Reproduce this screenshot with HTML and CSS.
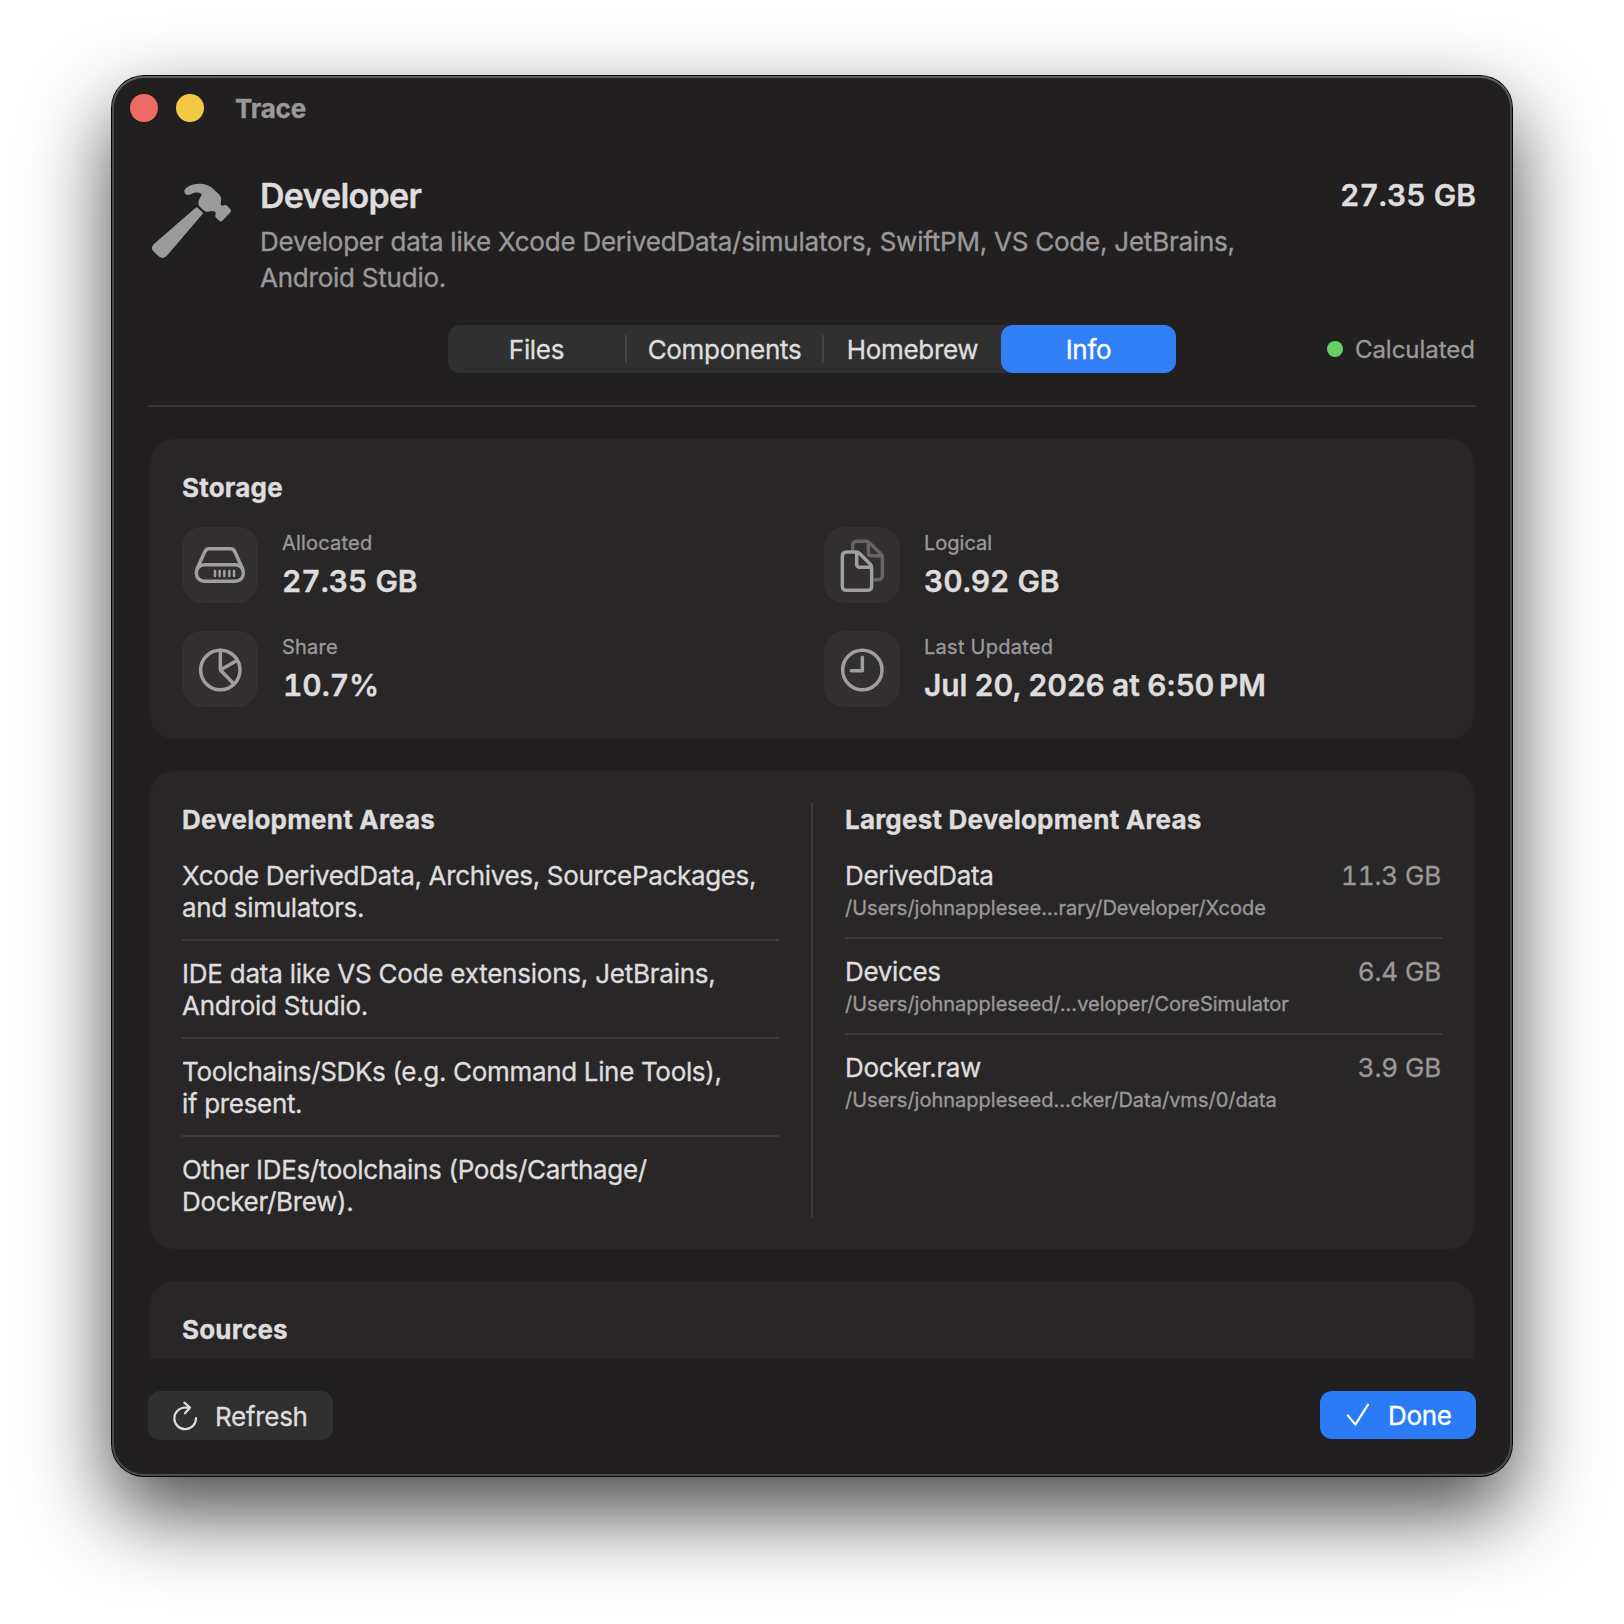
FILE: index.html
```html
<!DOCTYPE html>
<html lang="en">
<head>
<meta charset="utf-8">
<title>Trace</title>
<link rel="stylesheet" href="styles.css">
</head>
<body>
<main class="window">
  <header class="titlebar">
    <span class="light light-close"></span>
    <span class="light light-minimize"></span>
    <span class="titlebar-name">Trace</span>
  </header>

  <section class="summary">
    <svg class="summary-icon" viewBox="9 0 252 252" aria-hidden="true">
      <path d="M118 49C118 38 138 26 162 26C184 26 198 34 208 45L221 57C228 64 230 71 228 80L227 87C229 92 233 93 237 91C242 89 246 92 249 95L255 101C259 105 259 109 255 113L235 134C230 140 226 141 221 136L214 129C210 125 210 121 212 116C213 111 209 108 203 108L187 110C182 111 179 109 176 106L166 97C160 91 159 84 161 77C163 69 171 63 170 58C164 51 148 51 138 58C132 62 118 62 118 49Z"/>
      <path d="M152 98Q155 95 158 98L172 112Q175 115 172 118L67 241Q54 256 41 244L25 229Q16 219 26 208Z"/>
    </svg>
    <div class="summary-text">
      <h1>Developer</h1>
      <p>Developer data like Xcode DerivedData/simulators, SwiftPM, VS Code, JetBrains, Android Studio.</p>
    </div>
    <span class="summary-size">27.35 GB</span>
  </section>

  <nav class="toolbar">
    <div class="tabs">
      <span class="tab tab-files">Files</span>
      <i class="tab-rule"></i>
      <span class="tab tab-components">Components</span>
      <i class="tab-rule"></i>
      <span class="tab tab-homebrew">Homebrew</span>
      <span class="tab tab-info">Info</span>
    </div>
    <div class="status"><i class="status-dot"></i><span>Calculated</span></div>
  </nav>

  <div class="content">
    <section class="card">
      <h2>Storage</h2>
      <div class="stats">
        <div class="stat">
          <svg class="tile" viewBox="0 0 228 228" aria-hidden="true">
            <rect x="43" y="113" width="141" height="50" rx="24"/>
            <path d="M46 124L68 75Q72 65 82 65H145Q155 65 159 75L181 124"/>
            <path class="ticks" d="M99 132V147M113 132V147M127 132V147M142 132V147M156 132V147"/>
          </svg>
          <div><span class="label">Allocated</span><span class="value">27.35 GB</span></div>
        </div>
        <div class="stat">
          <svg class="tile" viewBox="0 0 228 228" aria-hidden="true">
            <path class="dim" d="M86 66V56Q86 43 99 43H127Q132 43 136 47L171 81Q175 85 175 91V145Q175 158 162 158H153"/>
            <path class="dim" d="M133 46V77Q133 86 142 86H173"/>
            <path d="M68 75H96Q102 75 106 79L139 112Q143 116 143 122V177Q143 190 130 190H68Q55 190 55 177V88Q55 75 68 75Z"/>
            <path d="M98 78V112Q98 121 107 121H141"/>
          </svg>
          <div><span class="label label-logical">Logical</span><span class="value">30.92 GB</span></div>
        </div>
        <div class="stat">
          <svg class="tile" viewBox="0 0 228 228" aria-hidden="true">
            <circle cx="115" cy="117" r="59"/>
            <path d="M115 58V117L166 88M115 117L155 158"/>
          </svg>
          <div><span class="label">Share</span><span class="value value-share">10.7%</span></div>
        </div>
        <div class="stat">
          <svg class="tile" viewBox="0 0 228 228" aria-hidden="true">
            <circle cx="115" cy="117" r="59"/>
            <path d="M115 79V119H82"/>
          </svg>
          <div><span class="label label-updated">Last Updated</span><span class="value value-date">Jul 20, 2026 at 6:50&#8201;PM</span></div>
        </div>
      </div>
    </section>

    <section class="card areas">
      <div>
        <h2>Development Areas</h2>
        <ul class="list">
          <li>Xcode DerivedData, Archives, SourcePackages,<br>and simulators.</li>
          <li class="relaxed">IDE data like VS Code extensions, JetBrains,<br>Android Studio.</li>
          <li>Toolchains/SDKs (e.g. Command Line Tools),<br>if present.</li>
          <li>Other IDEs/toolchains (Pods/Carthage/<br>Docker/Brew).</li>
        </ul>
      </div>
      <i class="areas-rule"></i>
      <div>
        <h2>Largest Development Areas</h2>
        <ul class="list">
          <li>
            <div class="entry"><span>DerivedData</span><span class="size">11.3 GB</span></div>
            <div class="path">/Users/johnapplesee…rary/Developer/Xcode</div>
          </li>
          <li>
            <div class="entry"><span>Devices</span><span class="size">6.4 GB</span></div>
            <div class="path">/Users/johnappleseed/…veloper/CoreSimulator</div>
          </li>
          <li>
            <div class="entry"><span>Docker.raw</span><span class="size">3.9 GB</span></div>
            <div class="path">/Users/johnappleseed…cker/Data/vms/0/data</div>
          </li>
        </ul>
      </div>
    </section>

    <section class="card">
      <h2>Sources</h2>
    </section>
  </div>

  <footer class="footer">
    <button class="button button-refresh">
      <svg viewBox="216 420 81 93" width="27" height="31" aria-hidden="true"><path d="M288 474A32.500 32.500 0 1 1 255.500 442.500L270 443M253 428L270 443L255 460"/></svg>
      <span>Refresh</span>
    </button>
    <button class="button button-done">
      <svg viewBox="285 430 78 78" width="26" height="26" aria-hidden="true"><path d="M293.500 470L316 498L354 438"/></svg>
      <span>Done</span>
    </button>
  </footer>
</main>
</body>
</html>
```
FILE: styles.css
```css
* { box-sizing: border-box; }

body {
  margin: 0;
  height: 1624px;
  padding: 76px 112px;
  background: #fff;
  color: #dedcdd;
  font: 400 26px/32px Inter, "Liberation Sans", sans-serif;
  letter-spacing: -0.3px;
  -webkit-text-stroke: 0.35px currentColor;
  overflow: hidden;
}

h1, h2, p, ul { margin: 0; padding: 0; }

.window {
  display: flex;
  flex-direction: column;
  width: 1400px;
  height: 1400px;
  border-radius: 32px;
  background: #211f20;
  box-shadow:
    inset 0 2px 0 #5e5e5e,
    inset 0 0 0 2px #4c4c4c,
    0 0 0 1px #060606,
    0 36px 84px rgba(0, 0, 0, 0.73);
}

.titlebar {
  display: flex;
  align-items: center;
  height: 63px;
  margin: 0 2px;
  padding: 2px 16px 0;
  border-bottom: 1px solid #252324;
}
.light { width: 28px; height: 28px; border-radius: 50%; }
.light-close { background: #ee6a62; }
.light-minimize { margin-left: 18px; background: #f3c944; }
.titlebar-name {
  margin-left: 31px;
  padding-top: 2px;
  color: #9a9899;
  font-weight: 700;
  letter-spacing: -0.2px;
}

.summary {
  display: flex;
  align-items: flex-start;
  padding: 36px 36px 0;
}
.summary-icon { flex: none; width: 84px; height: 84px; margin-right: 28px; fill: #9a9b9a; }
.summary-text { width: 1020px; margin-bottom: -1px; padding-top: 1px; }
.summary-text h1 {
  font-size: 34px;
  line-height: 40px;
  font-weight: 600;
  letter-spacing: -0.75px;
}
.summary-text p {
  margin-top: 8px;
  color: #9a9899;
  line-height: 36px;
  letter-spacing: -0.23px;
}
.summary-size {
  margin-left: auto;
  padding-top: 1px;
  font-size: 30px;
  line-height: 38px;
  font-weight: 600;
  letter-spacing: 0;
  font-variant-numeric: tabular-nums;
}

.toolbar {
  display: grid;
  grid-template-columns: 1fr auto 1fr;
  align-items: center;
  height: 112px;
  margin: 0 36px;
  padding: 30px 0 32px;
  border-bottom: 2px solid #383637;
}
.tabs {
  grid-column: 2;
  display: flex;
  align-items: center;
  height: 48px;
  border-radius: 12px;
  background: #303030;
}
.tab { height: 48px; padding-top: 1px; line-height: 48px; text-align: center; }
.tab-files, .tab-homebrew { width: 177px; }
.tab-components { width: 195px; }
.tab-info { width: 175px; border-radius: 12px; background: #317ff7; color: #fff; }
.tab-rule { width: 2px; height: 28px; background: #434343; }

.status {
  display: flex;
  align-items: center;
  justify-content: flex-end;
  gap: 12px;
  padding-right: 1px;
  color: #9a9899;
  font-size: 24px;
  letter-spacing: -0.02px;
}
.status span { padding-top: 1px; }
.status-dot { width: 16px; height: 16px; border-radius: 50%; background: #68cf67; }

.content {
  display: flex;
  flex-direction: column;
  gap: 32px;
  height: 952px;
  padding: 32px 38px 0;
  overflow: hidden;
}
.card {
  flex: none;
  padding: 32px;
  border-radius: 24px;
  background: #282627;
}
.card h2 {
  margin-bottom: 23px;
  padding-top: 1px;
  font-size: 26px;
  line-height: 32px;
  font-weight: 700;
  letter-spacing: 0.2px;
}

.stats { display: grid; grid-template-columns: 1fr 1fr; gap: 28px 24px; }
.stat { display: flex; align-items: center; gap: 24px; }
.tile {
  width: 76px;
  height: 76px;
  border-radius: 20px;
  background: #312f30;
  fill: none;
  stroke: #a09e9f;
  stroke-width: 10.5;
  stroke-linecap: round;
  stroke-linejoin: round;
}
.tile .dim { stroke: #666465; }
.tile .ticks { stroke-width: 7.5; }
.label, .value { display: block; }
.label {
  margin-bottom: 8px;
  color: #9a9899;
  font-size: 20px;
  line-height: 24px;
  letter-spacing: 0.2px;
}
.label-logical { letter-spacing: 0; }
.label-updated { letter-spacing: 0.27px; }
.value {
  font-size: 30px;
  line-height: 36px;
  font-weight: 600;
  letter-spacing: -0.05px;
  font-variant-numeric: tabular-nums;
}
.value-share { padding-left: 1px; }
.value-date { font-variant-numeric: normal; letter-spacing: -0.09px; }

.areas { display: grid; grid-template-columns: 1fr 2px 1fr; gap: 32px; }
.areas-rule { background: #3c3a3b; }
.list { margin-bottom: -1px; list-style: none; }
.list li { padding-top: 1px; letter-spacing: -0.33px; }
.list li + li {
  margin-top: 15px;
  padding-top: 17px;
  border-top: 2px solid #3c3a3b;
}
.list .relaxed { letter-spacing: -0.23px; }
.entry { display: flex; justify-content: space-between; }
.size {
  padding-right: 1px;
  color: #9a9899;
  letter-spacing: -0.15px;
  font-variant-numeric: tabular-nums;
}
.path {
  margin-top: 3px;
  padding-bottom: 1px;
  color: #9a9899;
  font-size: 20px;
  line-height: 26px;
  letter-spacing: 0;
}

.footer {
  display: flex;
  justify-content: space-between;
  align-items: flex-start;
  padding: 32px 36px 0;
}
.button {
  display: flex;
  align-items: center;
  border: 0;
  border-radius: 12px;
  color: inherit;
  font: inherit;
  letter-spacing: -0.3px;
}
.button span { padding-top: 2px; }
.button svg { fill: none; stroke: currentColor; stroke-width: 6.5; stroke-linecap: round; stroke-linejoin: round; }
.button-refresh { width: 185px; height: 49px; padding: 0 0 0 24px; gap: 16px; background: #303030; }
.button-done {
  width: 156px;
  height: 48px;
  padding: 0 0 0 25px;
  gap: 17px;
  background: #2c7bf6;
  color: #fff;
}
```
